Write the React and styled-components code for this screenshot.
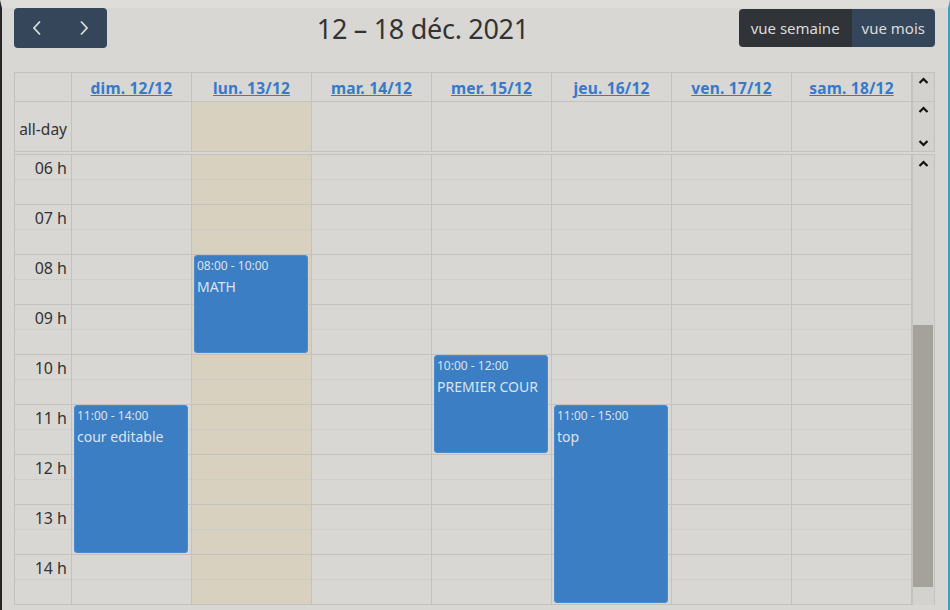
import React from "react";
import styled, { createGlobalStyle } from "styled-components";

const GlobalStyle = createGlobalStyle`
  html, body {
    margin: 0;
    padding: 0;
    background: #d8d7d3;
    font-family: "Noto Sans", "Open Sans", sans-serif;
    color: #333;
  }
`;

const days = [
  { label: "dim. 12/12" },
  { label: "lun. 13/12", today: true },
  { label: "mar. 14/12" },
  { label: "mer. 15/12" },
  { label: "jeu. 16/12" },
  { label: "ven. 17/12" },
  { label: "sam. 18/12" },
];

const hours = ["06", "07", "08", "09", "10", "11", "12", "13", "14"];

const events = [
  { day: 0, start: 11, end: 14, time: "11:00 - 14:00", title: "cour editable" },
  { day: 1, start: 8, end: 10, time: "08:00 - 10:00", title: "MATH" },
  { day: 3, start: 10, end: 12, time: "10:00 - 12:00", title: "PREMIER COUR" },
  { day: 4, start: 11, end: 15, time: "11:00 - 15:00", title: "top" },
];

const SLOT = 50;
const FIRST_HOUR = 6;
const COLS = "56px repeat(7, 120px) 2px 21px 1px";

const Page = styled.div`
  height: 602px;
  overflow: hidden;
  border-top: 8px solid #dedddA;
  border-left: 2px solid #262626;
  border-right: 2px solid #3aa3bf;
  padding: 0 13px 0 12px;
`;

const Toolbar = styled.div`
  display: flex;
  align-items: center;
  justify-content: space-between;
  height: 40px;
  margin-bottom: 24px;
`;

const Group = styled.div`
  display: flex;
  border-radius: 4px;
  overflow: hidden;
`;

const NavButton = styled.button`
  width: 46.5px;
  height: 40px;
  border: none;
  padding: 0;
  background: #35465a;
  display: flex;
  align-items: center;
  justify-content: center;
  color: #dcdcdc;
`;

const ViewButton = styled.button`
  height: 38px;
  border: none;
  padding: 0 ${(p) => (p.$active ? "12px" : "10px")};
  background: ${(p) => (p.$active ? "#303438" : "#35465a")};
  color: #dcdcdc;
  font-family: "Noto Sans", "Open Sans", sans-serif;
  font-size: 15px;
`;

const Title = styled.h2`
  margin: 0;
  font-size: 27px;
  font-weight: 400;
  color: #333;
  letter-spacing: -0.3px;
`;

const Calendar = styled.div`
  border: 1px solid #c4c2bd;
  border-right: none;
  border-bottom: none;
`;

const Row = styled.div`
  display: grid;
  grid-template-columns: ${COLS};
  height: ${(p) => p.$h}px;
  border-bottom: 1px solid #c4c2bd;
`;

const HeadCell = styled.div`
  border-left: 1px solid #c4c2bd;
  display: flex;
  align-items: center;
  justify-content: center;
  background: ${(p) => (p.$today ? "#d8d1c0" : "transparent")};
  &:first-child {
    border-left: none;
  }
`;

const DayLink = styled.a`
  color: #3a78c9;
  font-weight: 700;
  font-size: 15.5px;
  letter-spacing: 0.2px;
  text-decoration: underline;
  padding-top: 2px;
`;

const AllDayLabel = styled.div`
  display: flex;
  align-items: center;
  justify-content: flex-end;
  padding: 4px 4px 0 0;
  font-size: 15.5px;
`;

const Gutter = styled.div`
  background: #d3d2ce;
  display: flex;
  flex-direction: column;
  align-items: center;
  justify-content: ${(p) => p.$justify || "flex-start"};
  padding: ${(p) => p.$pad || "0"};
`;

const EdgeLine = styled.div`
  background: #c4c2bd;
`;

const Divider = styled.div`
  height: 2px;
  border-bottom: 1px solid #c4c2bd;
`;

const Body = styled.div`
  display: grid;
  grid-template-columns: ${COLS};
`;

const Column = styled.div`
  position: relative;
  border-left: ${(p) => (p.$axis ? "none" : "1px solid #c4c2bd")};
  background: ${(p) => (p.$today ? "#d8d1c0" : "transparent")};
`;

const HourCell = styled.div`
  height: ${SLOT - 1}px;
  border-bottom: 1px solid #c4c2bd;
  position: relative;
  &::after {
    content: "";
    position: absolute;
    left: 0;
    right: 0;
    top: 24px;
    border-top: 1px dotted #c8c6c2;
  }
`;

const HourLabel = styled(HourCell)`
  text-align: right;
  padding-right: 4px;
  font-size: 16px;
  line-height: 26px;
`;

const Event = styled.div`
  position: absolute;
  left: 2px;
  right: 3px;
  background: #3b7ec4;
  border: 1px solid #4a8ad0;
  border-radius: 3px;
  color: #dde3ea;
  padding: 2px 2px;
  box-sizing: border-box;
`;

const EventTime = styled.div`
  font-size: 12px;
  line-height: 16px;
`;

const EventTitle = styled.div`
  font-size: 14px;
  line-height: 20px;
  margin-top: 3px;
`;

const ScrollTrack = styled.div`
  background: #d3d2ce;
  display: flex;
  flex-direction: column;
  align-items: center;
  padding-top: 5px;
  position: relative;
`;

const Thumb = styled.div`
  position: absolute;
  left: 0;
  right: 1px;
  top: 170px;
  height: 262px;
  background: #a5a19b;
`;

const Chevron = ({ down }) => (
  <svg width="11" height="8" viewBox="0 0 11 8">
    <path
      d={down ? "M1.5 2 L5.5 6 L9.5 2" : "M1.5 6 L5.5 2 L9.5 6"}
      fill="none"
      stroke="#111"
      strokeWidth="2.2"
    />
  </svg>
);

const Arrow = ({ left }) => (
  <svg width="10" height="16" viewBox="0 0 10 16">
    <path
      d={left ? "M8 1.5 L2 8 L8 14.5" : "M2 1.5 L8 8 L2 14.5"}
      fill="none"
      stroke="#dcdcdc"
      strokeWidth="1.8"
    />
  </svg>
);

export default function App() {
  return (
    <>
      <GlobalStyle />
      <Page>
        <Toolbar>
          <Group>
            <NavButton aria-label="prev">
              <Arrow left />
            </NavButton>
            <NavButton aria-label="next">
              <Arrow />
            </NavButton>
          </Group>
          <Title>12 – 18 déc. 2021</Title>
          <Group>
            <ViewButton $active>vue semaine</ViewButton>
            <ViewButton>vue mois</ViewButton>
          </Group>
        </Toolbar>

        <Calendar>
          <Row $h={28}>
            <HeadCell />
            {days.map((d) => (
              <HeadCell key={d.label}>
                <DayLink href="#">{d.label}</DayLink>
              </HeadCell>
            ))}
            <EdgeLine />
            <Gutter $pad="4px 0 0">
              <Chevron />
            </Gutter>
            <EdgeLine />
          </Row>
          <Row $h={49}>
            <AllDayLabel>all-day</AllDayLabel>
            {days.map((d) => (
              <HeadCell key={d.label} $today={d.today} />
            ))}
            <EdgeLine />
            <Gutter $justify="space-between" $pad="4px 0 4px">
              <Chevron />
              <Chevron down />
            </Gutter>
            <EdgeLine />
          </Row>
          <Divider />
          <Body>
            <Column $axis>
              {hours.map((h) => (
                <HourLabel key={h}>{h} h</HourLabel>
              ))}
            </Column>
            {days.map((d, i) => (
              <Column key={d.label} $today={d.today}>
                {hours.map((h) => (
                  <HourCell key={h} />
                ))}
                {events
                  .filter((e) => e.day === i)
                  .map((e) => (
                    <Event
                      key={e.title}
                      style={{
                        top: (e.start - FIRST_HOUR) * SLOT,
                        height: (e.end - e.start) * SLOT - 2,
                      }}
                    >
                      <EventTime>{e.time}</EventTime>
                      <EventTitle>{e.title}</EventTitle>
                    </Event>
                  ))}
              </Column>
            ))}
            <EdgeLine />
            <ScrollTrack>
              <Chevron />
              <Thumb />
            </ScrollTrack>
            <EdgeLine />
          </Body>
        </Calendar>
      </Page>
    </>
  );
}
